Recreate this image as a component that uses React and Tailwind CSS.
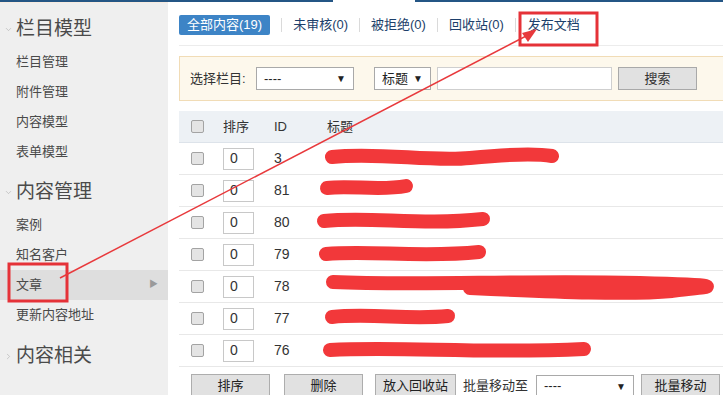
import { ChevronDown, ChevronRight } from "lucide-react";

const font = { fontFamily: '"Liberation Sans", "Noto Sans CJK SC", sans-serif' };

const rows = ["3", "81", "80", "79", "78", "77", "76"];

function Box() {
  return <span className="block w-[13px] h-[13px] border border-[#a3a3a3] rounded-[2px] bg-[#e4e4e4]" />;
}

function Select({ w, label }) {
  return (
    <div className={`h-[23px] ${w} border border-[#a9a9a9] bg-white flex items-center justify-between px-[7px] text-[13px] text-[#222]`}>
      <span>{label}</span>
      <span className="text-[10px]">▼</span>
    </div>
  );
}

function Btn({ w, children }) {
  return (
    <div className={`h-[24px] ${w} border border-[#adadad] bg-[#e1e1e1] flex items-center justify-center text-[13px] text-[#222]`}>
      {children}
    </div>
  );
}

function Sidebar() {
  const Item = ({ children, active }) => (
    <div className={`h-[30px] flex items-center justify-between pl-[16px] pr-[10px] text-[13px] text-[#4a4a4a] ${active ? "bg-[#dedede]" : ""}`}>
      <span>{children}</span>
      {active && <span className="text-[9px] text-[#9a9a9a]">▶</span>}
    </div>
  );
  const Head = ({ children, open, cls }) => (
    <div className={`h-[36px] flex items-center ${cls}`}>
      <span className="w-[16px] flex justify-center text-[#aaa]">
        {open ? <ChevronDown size={9} strokeWidth={1.5} /> : <ChevronRight size={9} strokeWidth={1.5} />}
      </span>
      <span className="text-[19px] text-[#4a4a4a]">{children}</span>
    </div>
  );
  return (
    <div className="w-[168px] shrink-0 bg-[#efefef] pt-[8px] border-t border-[#f7ebe0]">
      <Head open>栏目模型</Head>
      <Item>栏目管理</Item>
      <Item>附件管理</Item>
      <Item>内容模型</Item>
      <Item>表单模型</Item>
      <Head open cls="mt-[7px]">内容管理</Head>
      <Item>案例</Item>
      <Item>知名客户</Item>
      <Item active>文章</Item>
      <Item>更新内容地址</Item>
      <Head cls="mt-[8px]">内容相关</Head>
    </div>
  );
}

function Tabs() {
  const Sep = () => <span className="w-px h-[14px] bg-[#dadada]" />;
  return (
    <div className="flex items-center gap-[11px] mt-[13px] pb-[10px] border-b border-[#ececec] text-[13px]">
      <span className="h-[20px] px-[8px] flex items-center bg-[#3d84c6] text-white rounded-[2px]">全部内容(19)</span>
      <Sep />
      <span className="text-[#1c3f6b]">未审核(0)</span>
      <Sep />
      <span className="text-[#1c3f6b]">被拒绝(0)</span>
      <Sep />
      <span className="text-[#1c3f6b]">回收站(0)</span>
      <Sep />
      <span className="text-[#1c3f6b] ml-[1px]">发布文档</span>
    </div>
  );
}

function SearchBar() {
  return (
    <div className="mt-[10px] h-[45px] w-[560px] bg-[#fdf8ec] border border-[#f1dcb6] flex items-center pl-[10px] text-[13px] text-[#333]">
      <span className="w-[66px]">选择栏目:</span>
      <Select w="w-[98px]" label="----" />
      <div className="w-[20px]" />
      <Select w="w-[57px]" label="标题" />
      <div className="ml-[6px] h-[23px] w-[175px] border border-[#cfcfcf] bg-white" />
      <div className="ml-[6px] h-[23px] w-[79px] border border-[#a9a9a9] bg-[#e1e1e1] flex items-center justify-center">搜索</div>
    </div>
  );
}

function Table() {
  return (
    <div className="mt-[10px] w-[560px] text-[13px] text-[#333]">
      <div className="h-[32px] bg-[#edf1f5] border-b border-[#dde3ea] flex items-center">
        <div className="w-[44px] pl-[12px]"><Box /></div>
        <div className="w-[51px]">排序</div>
        <div className="w-[53px]">ID</div>
        <div>标题</div>
      </div>
      {rows.map((id) => (
        <div key={id} className="h-[32px] border-b border-[#e8e8e8] flex items-center">
          <div className="w-[44px] pl-[12px]"><Box /></div>
          <div className="w-[51px]">
            <div className="w-[31px] h-[22px] border border-[#c8c8c8] bg-white flex items-center pl-[6px] text-[14px]">0</div>
          </div>
          <div className="w-[53px] text-[14px]">{id}</div>
          <div />
        </div>
      ))}
      <div className="mt-[7px] flex items-center pl-[12px]">
        <Btn w="w-[79px]">排序</Btn>
        <div className="ml-[14px]"><Btn w="w-[79px]">删除</Btn></div>
        <div className="ml-[12px]"><Btn w="w-[81px]">放入回收站</Btn></div>
        <span className="ml-[7px] w-[73px]">批量移动至</span>
        <Select w="w-[98px]" label="----" />
        <div className="ml-[7px]"><Btn w="w-[79px]">批量移动</Btn></div>
      </div>
    </div>
  );
}

function Marks() {
  const red = "#f2383a";
  const scribbles = [
    "M332 157 C380 152 430 162 470 158 S540 154 552 156",
    "M327 188 C350 185 380 191 406 186",
    "M324 221 C370 216 420 226 483 219",
    "M326 254 C370 250 420 258 479 252",
    "M333 282 C420 286 520 280 640 283 S684 288 672 291 C630 295 560 292 470 288",
    "M332 317 C370 313 410 320 448 316",
    "M330 350 C400 346 480 354 584 349",
  ];
  return (
    <svg className="absolute inset-0 pointer-events-none" width="723" height="395" viewBox="0 0 723 395">
      {scribbles.map((d, i) => (
        <path key={i} d={d} fill="none" stroke={red} strokeWidth="14" strokeLinecap="round" strokeLinejoin="round" />
      ))}
      <rect x="9" y="264" width="58" height="37" fill="none" stroke="#e53238" strokeWidth="3" />
      <rect x="520" y="13" width="77" height="32" fill="none" stroke="#e53238" strokeWidth="3" />
      <line x1="60" y1="278" x2="530" y2="34" stroke="#e8393c" strokeWidth="1.5" />
      <polygon points="537,29 522,33 528,42" fill="#e8393c" />
    </svg>
  );
}

export default function App() {
  return (
    <div className="relative w-[723px] h-[395px] overflow-hidden bg-white flex flex-col" style={font}>
      <div className="h-[2px] flex shrink-0">
        <div className="w-[333px] bg-[#245685]" />
        <div className="w-[82px] bg-white" />
        <div className="flex-1 bg-[#245685]" />
      </div>
      <div className="flex flex-1">
        <Sidebar />
        <div className="flex-1 pl-[11px] overflow-hidden">
          <Tabs />
          <SearchBar />
          <Table />
        </div>
      </div>
      <Marks />
    </div>
  );
}
